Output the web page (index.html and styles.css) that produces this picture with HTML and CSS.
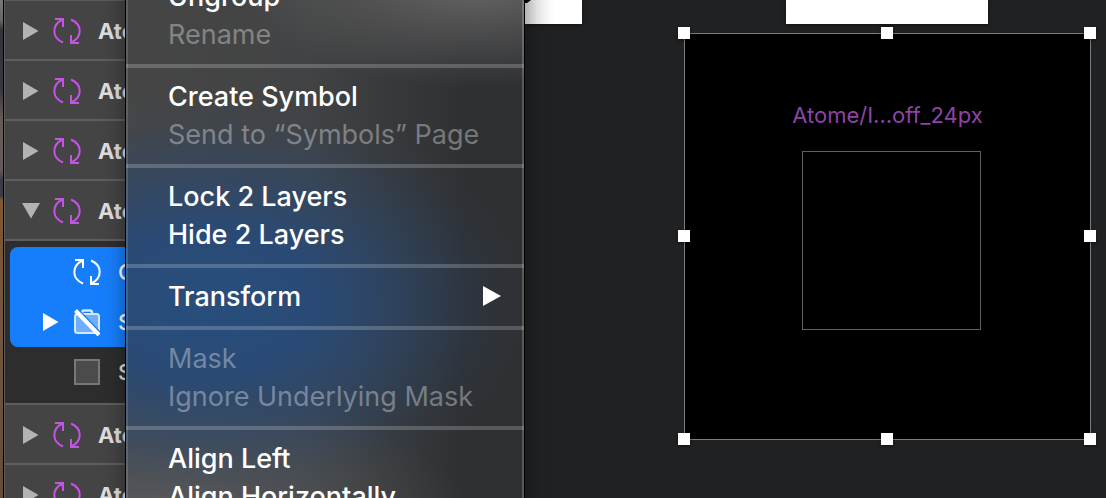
FILE: index.html
```html
<!DOCTYPE html>
<html lang="en">
<head>
<meta charset="utf-8">
<title>Layers</title>
<link rel="stylesheet" href="styles.css">
</head>
<body>
<svg class="defs" aria-hidden="true">
  <symbol id="sync" viewBox="0 0 28 28">
    <path d="M10 25.500C-1.500 20.500-1.500 8 9.500 2.500M18 2.500C29.500 7.500 29.500 20 18.500 25.500M2 2H10V10M18 18V26H26" fill="none" stroke="currentColor" stroke-width="2"/>
  </symbol>
  <symbol id="right" viewBox="0 0 16 20"><path d="M0 1L15.500 10L0 19Z" fill="currentColor"/></symbol>
  <symbol id="down" viewBox="0 0 20 16"><path d="M1 0H19L10 15.500Z" fill="currentColor"/></symbol>
</svg>
<div class="app">
  <div class="wallpaper"></div>
  <aside class="sidebar">
    <div class="row"><button class="toggle" aria-label="Expand"><svg class="right"><use href="#right"/></svg></button><svg class="sync"><use href="#sync"/></svg><span class="name">Atome</span></div>
    <div class="row"><button class="toggle" aria-label="Expand"><svg class="right"><use href="#right"/></svg></button><svg class="sync"><use href="#sync"/></svg><span class="name">Atome</span></div>
    <div class="row"><button class="toggle" aria-label="Expand"><svg class="right"><use href="#right"/></svg></button><svg class="sync"><use href="#sync"/></svg><span class="name">Atome</span></div>
    <div class="row"><button class="toggle" aria-label="Collapse"><svg class="down"><use href="#down"/></svg></button><svg class="sync"><use href="#sync"/></svg><span class="name">Atome</span></div>
    <div class="children">
      <div class="selected">
        <div class="child"><span class="toggle"></span><svg class="sync"><use href="#sync"/></svg><span>C</span></div>
        <div class="child"><button class="toggle" aria-label="Expand"><svg class="right"><use href="#right"/></svg></button>
          <svg class="sync" viewBox="0 0 28 28"><path d="M9 6V4.500Q9 2.500 11 2.500H17Q19 2.500 19 4.500V6" fill="none" stroke="#d5e7ff" stroke-width="2.400"/><rect x="2" y="6" width="24" height="19" rx="2.500" fill="#70aefc" stroke="#d5e7ff" stroke-width="2"/><path d="M5 1L28 25" stroke="#177efb" stroke-width="1.500"/><path d="M2.500 2.500L26 27" stroke="#fff" stroke-width="4"/></svg>
          <span>S</span></div>
      </div>
      <div class="child plain"><span class="toggle"></span><span class="swatch"></span><span>S</span></div>
    </div>
    <div class="row"><button class="toggle" aria-label="Expand"><svg class="right"><use href="#right"/></svg></button><svg class="sync"><use href="#sync"/></svg><span class="name">Atome</span></div>
    <div class="row"><button class="toggle" aria-label="Expand"><svg class="right"><use href="#right"/></svg></button><svg class="sync"><use href="#sync"/></svg><span class="name">Atome</span></div>
  </aside>
  <main class="canvas">
    <div class="sheet first"><svg viewBox="0 0 6 4"><path d="M0 0H6L2 3L0 3Z" fill="#000"/></svg></div>
    <div class="sheet second"></div>
    <section class="artboard">
      <span class="label">Atome/I...off_24px</span>
      <div class="frame"></div>
      <i class="handle nw"></i><i class="handle n"></i><i class="handle ne"></i>
      <i class="handle w"></i><i class="handle e"></i>
      <i class="handle sw"></i><i class="handle s"></i><i class="handle se"></i>
    </section>
  </main>
  <div class="menu" role="menu">
    <button role="menuitem">Ungroup</button>
    <button role="menuitem" disabled>Rename</button>
    <hr>
    <button role="menuitem">Create Symbol</button>
    <button role="menuitem" disabled>Send to “Symbols” Page</button>
    <hr>
    <button role="menuitem">Lock 2 Layers</button>
    <button role="menuitem">Hide 2 Layers</button>
    <hr>
    <button role="menuitem">Transform<svg class="submenu" viewBox="0 0 18 20"><path d="M0 0L18 10L0 20Z" fill="currentColor"/></svg></button>
    <hr>
    <button role="menuitem" disabled>Mask</button>
    <button role="menuitem" disabled>Ignore Underlying Mask</button>
    <hr>
    <button role="menuitem">Align Left</button>
    <button role="menuitem">Align Horizontally</button>
  </div>
</div>
</body>
</html>
```

FILE: styles.css
```css
* { box-sizing: border-box; }
body { margin: 0; background: #202123; font-family: Inter, "Liberation Sans", sans-serif; }
button { border: 0; padding: 0; background: none; color: inherit; font: inherit; }
.defs { display: none; }
.app { position: relative; display: flex; height: 100vh; overflow: hidden; }
.wallpaper {
  flex: 0 0 4px;
  border-right: 1px solid #000;
  background: linear-gradient(#777 0, #666 20px, #35343a 30px, #38373f 90px, #675b58 120px, #66595a 170px, #3d3b45 180px, #3d3b45 196px, #805831 200px, #74563e 330px, #664b36 100%);
}
.sidebar {
  flex: 0 0 521px;
  border-left: 1px solid #5c5c5c;
  border-top: 1px solid #5c5c5c;
  background: #444;
  overflow: hidden;
}
.row { display: flex; align-items: center; height: 60px; padding: 2px 0 0 16px; border-bottom: 2px solid #5e5e5e; color: #c653e8; }
.toggle { display: flex; align-items: center; justify-content: center; flex: 0 0 20px; height: 20px; margin-right: 12px; color: #b3b3b3; }
.right { width: 16px; height: 20px; }
.down { width: 20px; height: 16px; }
.sync { flex: 0 0 28px; width: 28px; height: 28px; margin-right: 17px; }
.name { color: #dedede; font-size: 22px; font-weight: 700; }
.children { padding: 6px 0 6px 5px; border-bottom: 2px solid #5e5e5e; background: #2d2d2d; }
.selected { border-radius: 8px 0 0 8px; background: #177efb; color: #fff; }
.child { display: flex; align-items: center; height: 50px; padding-left: 31px; font-size: 22px; font-weight: 500; }
.selected .toggle { color: #fff; }
.plain { color: #dedede; }
.swatch { flex: 0 0 26px; height: 26px; margin: 0 18px 0 1px; border: 2px solid #777; background: #4b4b4b; }

.canvas { position: relative; flex: 1; background: #202123; }
.sheet { position: absolute; top: 0; height: 24px; background: #fff; box-shadow: 0 1px 4px #0008; }
.first { left: 0; width: 57px; background: linear-gradient(90deg, #dedede, #fff 30px); }
.first svg { display: block; width: 6px; height: 4px; }
.second { left: 261px; width: 202px; }
.artboard {
  position: absolute; left: 159px; top: 33px;
  display: flex; flex-direction: column; align-items: center;
  width: 407px; height: 407px; padding-top: 66px;
  border: 1px solid #7d7d7d; background: #000;
}
.label { margin-bottom: 21px; color: #8e44a6; font-size: 22px; line-height: 30px; }
.frame { width: 179px; height: 179px; margin-left: 8px; border: 1px solid #606060; }
.handle { position: absolute; width: 12px; height: 12px; margin: -7px; background: #fff; box-shadow: 0 1px 3px #0008; }
.nw, .n, .ne { top: 0; }
.w, .e { top: 50%; }
.sw, .s, .se { top: 100%; margin-top: -6px; }
.nw, .w, .sw { left: 0; }
.n, .s { left: 50%; }
.ne, .e, .se { left: 100%; margin-left: -6px; }

.menu {
  position: absolute; top: -22px; left: 125px; width: 400px;
  border: solid #000; border-width: 0 1px;
  box-shadow: 0 0 20px #0006, inset 2px 0 #fff2, inset -2px 0 #fff3;
  background:
    radial-gradient(ellipse 240px 110px at 88% 0, #6a6a6a 0, #66666680 50%, #66666600 100%),
    radial-gradient(ellipse 330px 210px at 20% 325px, #284e7c 0, #264b7cdd 35%, #264b7c66 65%, #264b7c1c 85%, #264b7c00 100%),
    radial-gradient(ellipse 300px 130px at 10% 100%, #5a5a5a 0, #58585880 50%, #58585800 100%),
    linear-gradient(90deg, #464646 0, #424344 45%, #2f3032 85%);
}
.menu button { display: flex; align-items: center; width: 100%; height: 38px; padding: 0 23px 2px 42px; color: #fff; font-size: 27px; font-weight: 500; white-space: nowrap; }
.menu button:disabled { color: #ffffff59; font-weight: 400; }
.menu hr { height: 4px; margin: 10px 0; border: 0; background: #ffffff33; }
.submenu { width: 18px; height: 20px; margin-left: auto; }
```
